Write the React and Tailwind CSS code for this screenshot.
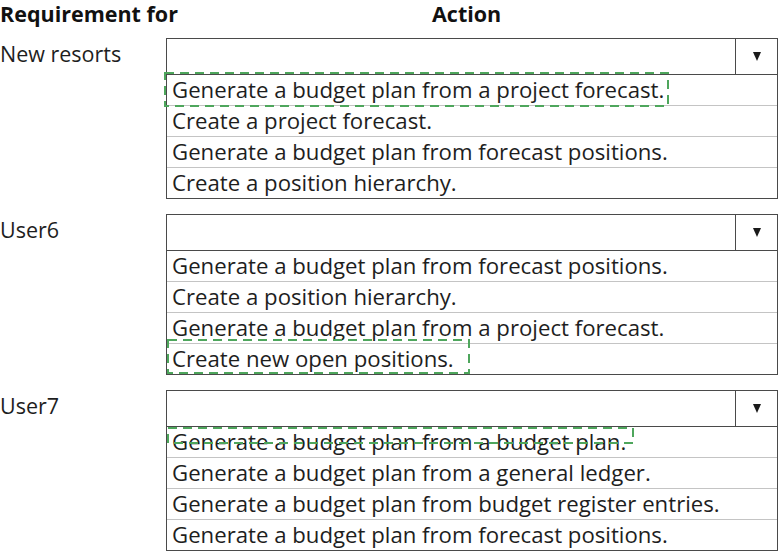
import React from "react";

const groups = [
  {
    label: "New resorts",
    options: [
      "Generate a budget plan from a project forecast.",
      "Create a project forecast.",
      "Generate a budget plan from forecast positions.",
      "Create a position hierarchy.",
    ],
    dash: { left: -3, top: 33, width: 505, height: 35 },
  },
  {
    label: "User6",
    options: [
      "Generate a budget plan from forecast positions.",
      "Create a position hierarchy.",
      "Generate a budget plan from a project forecast.",
      "Create new open positions.",
    ],
    dash: { left: 0, top: 124, width: 303, height: 35 },
  },
  {
    label: "User7",
    options: [
      "Generate a budget plan from a budget plan.",
      "Generate a budget plan from a general ledger.",
      "Generate a budget plan from budget register entries.",
      "Generate a budget plan from forecast positions.",
    ],
    dash: { left: 0, top: 36, width: 467, height: 17 },
  },
];

function Dashed({ d }) {
  return (
    <div
      className="absolute pointer-events-none"
      style={{ left: d.left, top: d.top, width: d.width, height: d.height }}
    >
      <svg width={d.width} height={d.height} className="block overflow-visible">
        <rect
          x="1"
          y="1"
          width={d.width - 2}
          height={d.height - 2}
          fill="none"
          stroke="#4ea65c"
          strokeWidth="2"
          strokeDasharray="9 6"
        />
      </svg>
    </div>
  );
}

function Group({ g }) {
  return (
    <div className="flex">
      <div className="w-[166px] shrink-0 text-[21.5px] leading-[26px] pt-[3px] text-[#1e1e1e] whitespace-nowrap">
        {g.label}
      </div>
      <div className="relative w-[612px] border border-[#4a4a4a] bg-white">
        <div className="flex h-[36px] border-b border-[#4a4a4a]">
          <div className="flex-1" />
          <div className="w-[42px] border-l border-[#4a4a4a] flex items-center justify-center">
            <svg width="8" height="9" viewBox="0 0 8 9">
              <path d="M0 0 L8 0 L4 9 Z" fill="#1a1a1a" />
            </svg>
          </div>
        </div>
        {g.options.map((o, i) => (
          <div
            key={i}
            className={
              "h-[30px] box-content flex items-center pl-[5px] text-[22.2px] leading-[30px] text-[#1e1e1e] whitespace-nowrap " +
              (i > 0 ? "border-t border-[#c4c4c4]" : "")
            }
          >
            {o}
          </div>
        ))}
        <Dashed d={g.dash} />
      </div>
    </div>
  );
}

export default function App() {
  return (
    <div
      className="w-[778px] h-[553px] bg-white overflow-hidden"
      style={{ fontFamily: '"Open Sans", "Noto Sans", sans-serif' }}
    >
      <div className="flex h-[38px] text-[21.5px] font-bold text-[#111] leading-[28px]">
        <div className="w-[432px] whitespace-nowrap">Requirement for</div>
        <div className="whitespace-nowrap">Action</div>
      </div>
      <div className="flex flex-col gap-[15px]">
        {groups.map((g, i) => (
          <Group key={i} g={g} />
        ))}
      </div>
    </div>
  );
}
